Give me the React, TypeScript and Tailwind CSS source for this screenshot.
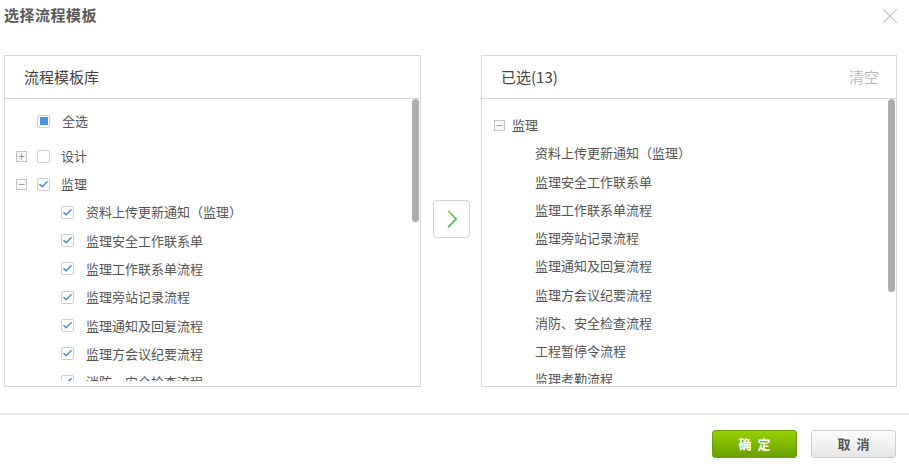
import { Plus, Minus, Check, X } from "lucide-react";

const leftItems = [
  "资料上传更新通知（监理）",
  "监理安全工作联系单",
  "监理工作联系单流程",
  "监理旁站记录流程",
  "监理通知及回复流程",
  "监理方会议纪要流程",
  "消防、安全检查流程",
];

const rightItems = [
  "资料上传更新通知（监理）",
  "监理安全工作联系单",
  "监理工作联系单流程",
  "监理旁站记录流程",
  "监理通知及回复流程",
  "监理方会议纪要流程",
  "消防、安全检查流程",
  "工程暂停令流程",
  "监理考勤流程",
];

function Toggle({ open }: { open: boolean }) {
  return (
    <span className="flex items-center justify-center w-[11px] h-[11px] border border-[#c4c4c4] bg-[#f7f7f7] text-[#888]">
      {open ? <Minus size={9} strokeWidth={2} /> : <Plus size={9} strokeWidth={2} />}
    </span>
  );
}

function Box({ state }: { state: "on" | "off" | "part" }) {
  return (
    <span className="flex items-center justify-center w-[13px] h-[13px] border border-[#cfcfcf] rounded-[2px] bg-white shrink-0">
      {state === "on" && <Check size={11} strokeWidth={3} className="text-[#3d85e0]" />}
      {state === "part" && <span className="w-[8px] h-[8px] bg-[#4a8fe3]" />}
    </span>
  );
}

export default function App() {
  return (
    <div
      className="w-[909px] h-[475px] bg-white relative text-[#555]"
      style={{ fontFamily: '"Microsoft YaHei", "Noto Sans CJK SC", sans-serif' }}
    >
      {/* Title */}
      <div className="h-[31px] flex items-center justify-between pl-[4px] pr-[6px]">
        <span className="text-[15px] font-bold text-[#5a5a5a] tracking-[0.5px]">选择流程模板</span>
        <X size={26} strokeWidth={1} className="text-[#c8c8c8]" />
      </div>

      {/* Body */}
      <div className="flex items-center pl-[4px] mt-[24px]">
        {/* Left panel */}
        <div className="w-[417px] h-[332px] border border-[#d6d6d6] flex flex-col">
          <div className="h-[43px] shrink-0 border-b border-[#d6d6d6] flex items-center pl-[19px] text-[15px] text-[#444]">
            流程模板库
          </div>
          <div className="relative">
            <div className="absolute right-[1px] top-0 w-[7px] h-[123px] rounded-full bg-[#adadad] z-10" />
            <div className="h-[282px] overflow-hidden text-[13px] pt-[8px]">
              <div className="h-[28px] flex items-center pl-[32px] gap-[12px] mb-[7px]">
                <Box state="part" />
                <span>全选</span>
              </div>
              <div className="h-[28px] flex items-center pl-[11px]">
                <Toggle open={false} />
                <span className="ml-[10px]"><Box state="off" /></span>
                <span className="ml-[11px]">设计</span>
              </div>
              <div className="h-[28px] flex items-center pl-[11px]">
                <Toggle open={true} />
                <span className="ml-[10px]"><Box state="on" /></span>
                <span className="ml-[11px]">监理</span>
              </div>
              {leftItems.map((item) => (
                <div key={item} className="h-[28.3px] flex items-center pl-[56px] gap-[12px]">
                  <Box state="on" />
                  <span>{item}</span>
                </div>
              ))}
            </div>
          </div>
        </div>

        {/* Move button */}
        <div className="mx-[12px] w-[37px] h-[38px] border border-[#d3d3d3] rounded-[4px] flex items-center justify-center mt-[-4px]">
          <svg width="12" height="20" viewBox="0 0 12 20">
            <defs>
              <linearGradient id="chev" x1="0" y1="0" x2="1" y2="1">
                <stop offset="0" stopColor="#a5d22a" />
                <stop offset="0.5" stopColor="#5cbf3a" />
                <stop offset="1" stopColor="#3fb58d" />
              </linearGradient>
            </defs>
            <path d="M2 1.5 L10 10 L2 18.5" fill="none" stroke="url(#chev)" strokeWidth="1.8" />
          </svg>
        </div>

        {/* Right panel */}
        <div className="w-[416px] h-[332px] border border-[#d6d6d6] flex flex-col ml-[-1px]">
          <div className="h-[43px] shrink-0 border-b border-[#d6d6d6] flex items-center justify-between pl-[19px] pr-[17px] text-[15px]">
            <span className="text-[#444]">已选(13)</span>
            <span className="text-[#bdbdbd]">清空</span>
          </div>
          <div className="relative">
            <div className="absolute right-[1px] top-0 w-[7px] h-[193px] rounded-full bg-[#adadad] z-10" />
            <div className="h-[285px] overflow-hidden text-[13px] pt-[12px]">
              <div className="h-[28px] flex items-center pl-[12px]">
                <Toggle open={true} />
                <span className="ml-[7px]">监理</span>
              </div>
              {rightItems.map((item) => (
                <div key={item} className="h-[28.25px] flex items-center pl-[53px]">
                  {item}
                </div>
              ))}
            </div>
          </div>
        </div>
      </div>

      {/* Footer */}
      <div className="mt-[26px] border-t-2 border-[#e6e6e6] flex justify-end gap-[14px] pr-[13px] pt-[15px]">
        <button className="w-[85px] h-[28px] rounded-[3px] border border-[#6d9e0e] bg-gradient-to-b from-[#95d000] to-[#6aa200] text-white text-[13px] font-bold tracking-[6px] pl-[6px]">
          确定
        </button>
        <button className="w-[85px] h-[28px] rounded-[3px] border border-[#cdcdcd] bg-gradient-to-b from-[#fdfdfd] to-[#e6e6e6] text-[#555] text-[13px] font-bold tracking-[6px] pl-[6px]">
          取消
        </button>
      </div>
    </div>
  );
}
